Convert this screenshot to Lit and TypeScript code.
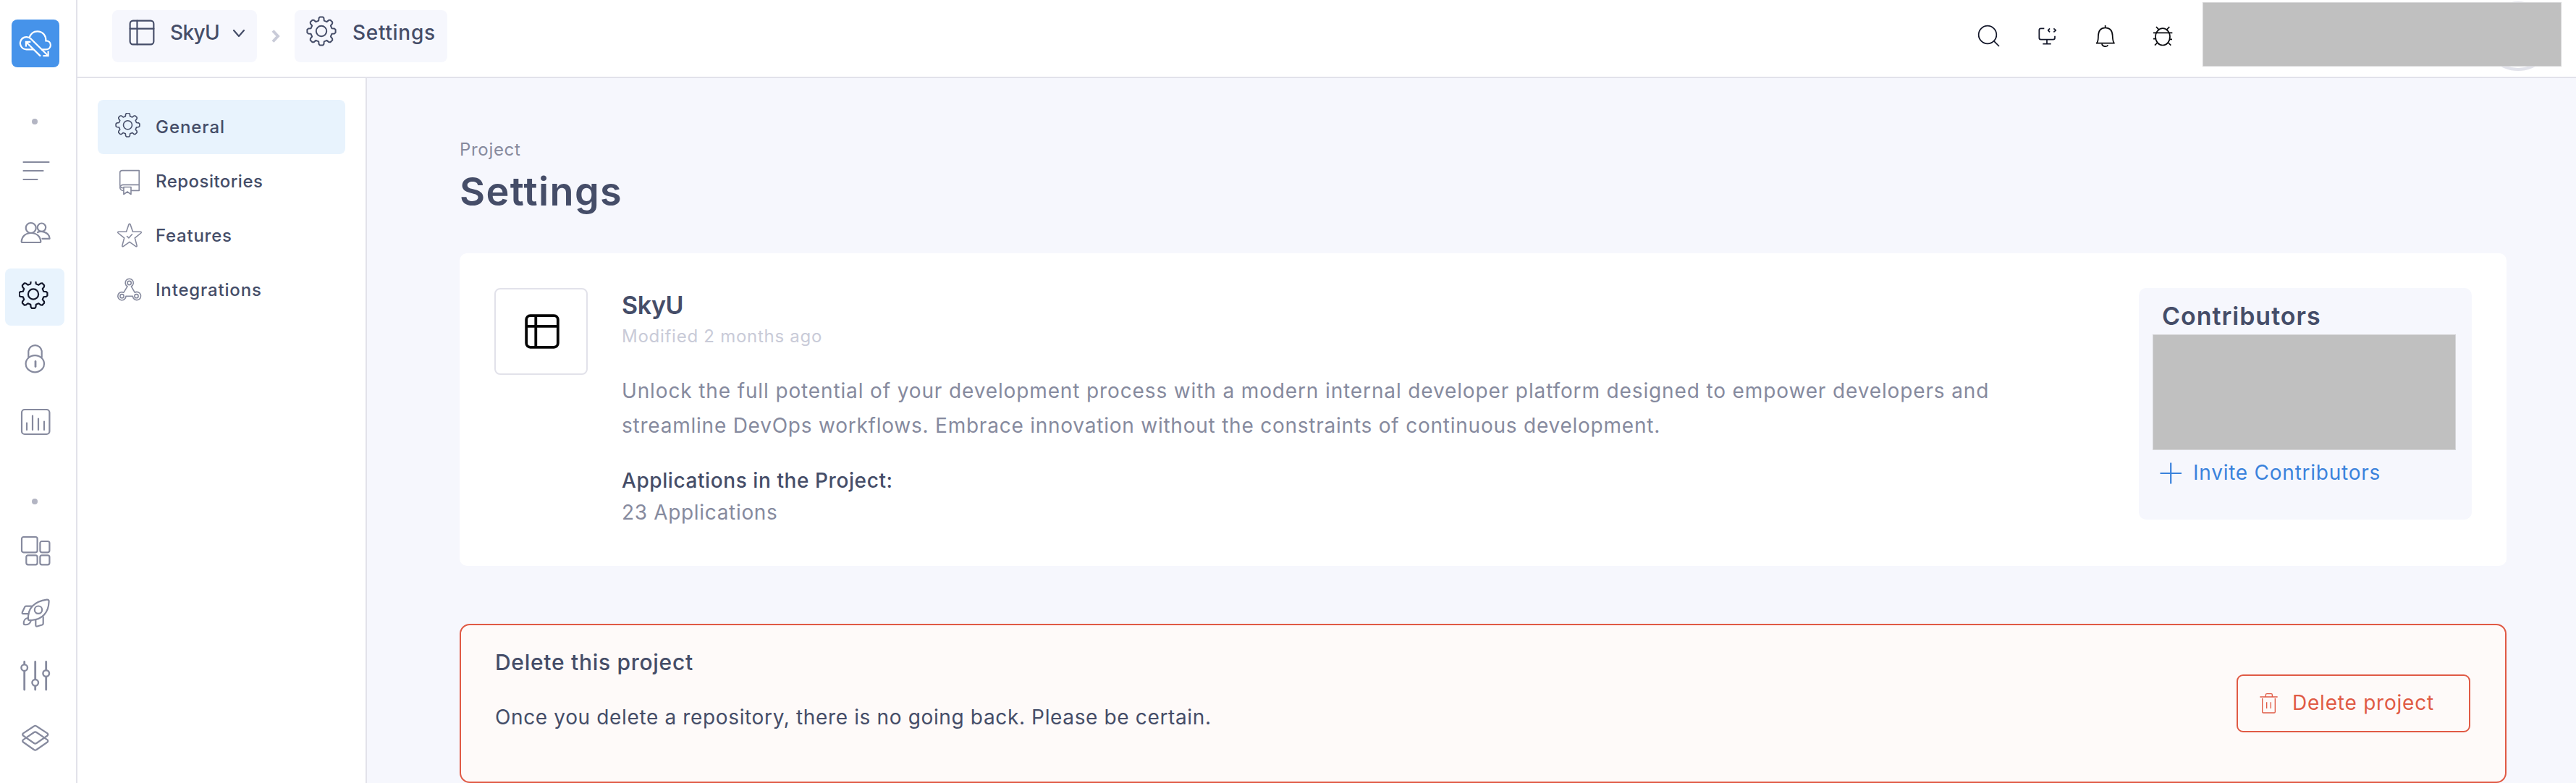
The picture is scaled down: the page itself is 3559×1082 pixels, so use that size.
import { LitElement, html, svg, css } from "lit";
import { customElement } from "lit/decorators.js";

/** Outline of an eight-toothed cog centred on (cx, cy) with outer radius r. */
function cogPath(cx: number, cy: number, r: number): string {
  const tooth = [
    [-0.19, -0.72],
    [-0.17, -0.9],
    [-0.1, -0.98],
    [0.1, -0.98],
    [0.17, -0.9],
    [0.19, -0.72],
  ];
  const out: string[] = [];
  for (let i = 0; i < 8; i++) {
    const a = (i * Math.PI) / 4;
    const p = tooth.map(([x, y]) => {
      const px = cx + r * (x * Math.cos(a) - y * Math.sin(a));
      const py = cy + r * (x * Math.sin(a) + y * Math.cos(a));
      return `${px.toFixed(2)} ${py.toFixed(2)}`;
    });
    out.push(`${i === 0 ? "M" : "L"}${p[0]}L${p[1]}L${p[2]}L${p[3]}L${p[4]}L${p[5]}`);
  }
  return out.join("") + "Z";
}

const cog = (cx: number, cy: number, r: number) => svg`
  <path d=${cogPath(cx, cy, r)} /><circle cx=${cx} cy=${cy} r=${r * 0.36} />`;

const tableIcon = svg`
  <rect x="2" y="2" width="40" height="40" rx="5" />
  <path d="M2 15.5H42M14 2V42" />`;

const railIcons = {
  menu: svg`<path d="M6.5 10H41.5M6.5 22H33.5M6.5 34H25.5" />`,
  users: svg`
    <circle cx="16.7" cy="15" r="7" />
    <path d="M3.7 33.5C4.4 26.5 9.5 22 17 22S29.6 26.5 30.3 33.5Q30.3 35 29 35H5Q3.7 35 3.7 33.5Z" />
    <circle cx="31.5" cy="14.2" r="5.7" />
    <path d="M26 21C28.5 19.6 32 19.6 35 20.6C40 22.3 42.6 26 42.6 29.8H32.5" />`,
  settings: cog(20, 17.5, 19.8),
  lock: svg`
    <path d="M13.3 20.5V12A9.3 9.3 0 0 1 31.7 12V20.5" />
    <ellipse cx="22.3" cy="29.7" rx="12.7" ry="11.6" />
    <path d="M23 26.5V33.5" stroke-width="2.8" />`,
  chart: svg`
    <rect x="4" y="5" width="38.4" height="34" rx="4" />
    <path d="M11 33V23.5M19 33V13.5M27 33V17.5M35 33V21.5" />`,
  blocks: svg`
    <rect x="4" y="3" width="21.6" height="21.3" rx="2.5" />
    <rect x="29.4" y="9" width="13" height="15.3" rx="2.5" />
    <rect x="10.3" y="28.3" width="15.3" height="13" rx="2.5" />
    <rect x="29.4" y="28.3" width="13" height="13" rx="2.5" />`,
  rocket: svg`
    <path d="M13 31C12 16 21 6 38.5 3.6Q41.8 3.2 41.6 6.5C41 21 33 31 18 32Q13.2 32.5 13 31Z" />
    <circle cx="27" cy="17.7" r="5.2" />
    <path d="M17.3 12.7H9.8Q8.8 12.7 8.4 13.6L4.8 21Q4.2 23.2 6 23.2H13.3" />
    <path d="M23.3 32V39Q23.5 40.9 25.4 40.5L32.2 38.5Q33.7 38 33.7 36.5V27.7" />
    <path d="M12 29C8.5 29.8 6.4 33 6.8 37Q7 38.2 8.2 38.2C12.5 38.6 15.5 36.5 16.7 33" />`,
  sliders: svg`
    <path d="M7.7 3.5V42M22.7 3.5V42M37.7 3.5V42" stroke-width="2.8" />
    <g fill="#fff" stroke-width="2.4">
      <circle cx="7.7" cy="11.7" r="4.3" /><circle cx="22.7" cy="32.3" r="4.3" /><circle cx="37.7" cy="19.5" r="4.3" />
    </g>`,
  layers: svg`
    <path d="M21 6.5Q22.7 5.2 24.4 6.5L39.5 16.3Q41 17.9 39.5 19.5L24.4 30Q22.7 31.2 21 30L6 19.5Q4.5 17.9 6 16.3Z" />
    <path d="M21 15Q22.7 13.8 24.4 15L39.5 25.3Q41 26.9 39.5 28.5L24.4 39Q22.7 40.3 21 39L6 28.5Q4.5 26.9 6 25.3Z" />`,
};

const navIcons = {
  general: cog(17.5, 16.7, 16.7),
  repos: svg`
    <path d="M11.8 28.7C7.5 29 6.7 27 6.7 24.5V7.5Q6.7 4.6 10 4.6H33.2V32.4H22.5" />
    <path d="M33.2 24.4H11Q6.9 24.8 6.7 28.5Q7.2 32 11.5 32.4" />
    <path d="M11.9 27.5H22V37.5L17 34L11.9 37.5Z" />`,
  features: svg`
    <path d="M19 4Q20 2.4 21 4L24.5 14.3H35.4Q37 14.8 35.8 16L27.3 22.8L30.2 33.6Q30.3 35.2 28.8 34.6L20 28.3L11.2 34.6Q9.7 35.2 9.8 33.6L12.7 22.8L4.2 16Q3 14.8 4.6 14.3H15.5Z" />
    <path d="M16.5 20.5L19 22.8L23.5 17.8" />`,
  integrations: svg`
    <circle cx="19.7" cy="10" r="2.6" /><circle cx="9.5" cy="28.2" r="2.6" /><circle cx="29.5" cy="28.2" r="2.6" />
    <path d="M17 14.8A5.6 5.6 0 1 1 22.4 14.8L27.2 23.2A5.6 5.6 0 1 1 24.4 28.2H15A5.6 5.6 0 1 1 11.9 23.2Z" />`,
};

const topIcons = {
  search: svg`<circle cx="48" cy="45" r="37" /><path d="M74 71L96 93" />`,
  monitor: svg`
    <path d="M40 19H26Q19 19 19 26V58Q19 65 26 65H77Q84 65 84 58V50M51 65V83M34 83H68" />
    <path d="M63 19L56 26.5L63 34M79 19L88 26.5L79 34" />`,
  bell: svg`
    <path d="M50 6V16M14 80C22 72 20 60 21 49C22 26 32 16 50 16C69 16 79 26 80 49C81 60 80 72 87 80Z" />
    <path d="M36 82C37 95 58 97 61 88" />`,
  bug: svg`
    <path d="M21 37H82M12 37H91" />
    <ellipse cx="51" cy="53.5" rx="30" ry="35" />
    <path d="M24 12L34 23M79 12L69 23M12 62H21M81 64H90M18 89L29 78M85 89L74 78" />`,
};

type RailKey = keyof typeof railIcons;

@customElement("side-rail")
class SideRail extends LitElement {
  static styles = css`
    :host {
      display: flex;
      flex-direction: column;
      box-sizing: border-box;
      width: 107px;
      height: 1082px;
      padding-top: 27px;
      border-right: 2px solid #e2e2ea;
      background: #fff;
      flex: none;
    }
    svg {
      width: 44px;
      height: 44px;
      fill: none;
      stroke: #868a9e;
      stroke-width: 2.2;
      stroke-linecap: round;
      stroke-linejoin: round;
    }
    .logo {
      width: 66px;
      height: 66px;
      margin-left: 16px;
      border-radius: 8px;
      background: #4693ea;
    }
    .logo svg {
      width: 66px;
      height: 66px;
      stroke: #fff;
      stroke-linecap: butt;
      stroke-linejoin: miter;
    }
    .dot {
      width: 8px;
      height: 8px;
      margin: 71px 0 21px 44px;
      border-radius: 50%;
      background: #b3b5c3;
    }
    .dot.second {
      margin-top: 60px;
    }
    .cell {
      display: flex;
      align-items: center;
      justify-content: center;
      width: 82px;
      height: 86px;
      margin-left: 7px;
    }
    .lock {
      height: 84px;
    }
    .chart {
      height: 92px;
    }
    .settings {
      height: 79px;
      margin-top: 6px;
      margin-bottom: 3px;
      border-radius: 8px;
      background: #e8f3fd;
    }
    .settings svg {
      stroke: #14182b;
    }
  `;

  private cell(name: RailKey) {
    return html`<div class="cell ${name}"><svg viewBox="0 0 44 44">${railIcons[name]}</svg></div>`;
  }

  render() {
    return html`
      <div class="logo">
        <svg viewBox="0 0 66 66">
          <path d="M30 41.3H20.7A8.6 8.6 0 1 1 26.3 26.3L49.5 49" />
          <path d="M24.3 25.3C26.5 19 31 16.3 35.5 16.3C42.5 16.3 47.6 21.5 47.4 29.3C51.5 29.3 53.9 32 53.9 35.2C53.9 39 51 41.3 47.5 41.3H41" />
          <path d="M40 50.6L20 31M19.9 37.5V30.9H26.3M50.6 43.5V50.2H43.5" />
        </svg>
      </div>
      <div class="dot"></div>
      ${(["menu", "users", "settings", "lock", "chart"] as RailKey[]).map((n) => this.cell(n))}
      <div class="dot second"></div>
      ${(["blocks", "rocket", "sliders", "layers"] as RailKey[]).map((n) => this.cell(n))}
    `;
  }
}

@customElement("top-bar")
class TopBar extends LitElement {
  static styles = css`
    :host {
      display: flex;
      align-items: center;
      box-sizing: border-box;
      height: 108px;
      padding: 0 20px 6px 48px;
      border-bottom: 2px solid #e2e2ea;
      background: #fff;
      color: #454d68;
    }
    svg {
      flex: none;
      fill: none;
      stroke: #454d68;
      stroke-width: 2;
      stroke-linecap: round;
      stroke-linejoin: round;
    }
    .chip {
      display: flex;
      align-items: center;
      box-sizing: border-box;
      height: 72px;
      padding-bottom: 10px;
      border-radius: 8px;
      background: #f6f7fd;
      font-size: 28px;
      font-weight: 500;
      line-height: 40px;
      white-space: nowrap;
    }
    .project {
      width: 200px;
      padding-left: 23px;
      letter-spacing: -0.64px;
    }
    .project .table {
      width: 36px;
      height: 36px;
      margin-right: 21px;
      stroke-width: 2.6;
    }
    .project .caret {
      width: 18px;
      height: 12px;
      margin-left: 18px;
      margin-top: 2px;
      stroke-width: 2.2;
    }
    .sep {
      width: 12px;
      height: 18px;
      margin: 0 20px;
      stroke: #c9cbd8;
      stroke-width: 4;
      stroke-linecap: butt;
      stroke-linejoin: miter;
    }
    .page {
      width: 211px;
      padding-left: 16px;
      letter-spacing: 0.7px;
    }
    .page svg {
      width: 42px;
      height: 42px;
      margin-right: 22px;
      margin-bottom: 4px;
    }
    .actions {
      display: flex;
      gap: 47px;
      margin-left: auto;
      margin-right: 38px;
    }
    .actions svg {
      width: 34px;
      height: 34px;
      stroke: #14182b;
      stroke-width: 5.2;
      stroke-linecap: butt;
    }
    .actions .bell,
    .actions .bug {
      stroke: #0b0c10;
    }
    .actions .bug {
      margin-left: -2px;
    }
    .user {
      position: relative;
      width: 496px;
      height: 96px;
    }
    .avatar {
      position: absolute;
      left: 388px;
      top: 0;
      box-sizing: border-box;
      width: 96px;
      height: 96px;
      border: 4px solid #e2e3eb;
      border-radius: 50%;
    }
    .mask {
      position: absolute;
      left: 0;
      top: 1px;
      box-sizing: border-box;
      width: 496px;
      height: 89px;
      border: 1px solid #d6d6d8;
      background: #c0c0c0;
    }
  `;

  render() {
    return html`
      <div class="chip project">
        <svg class="table" viewBox="0 0 44 44">${tableIcon}</svg>
        SkyU
        <svg class="caret" viewBox="0 0 18 12"><path d="M2 2L9 10L16 2" /></svg>
      </div>
      <svg class="sep" viewBox="0 0 12 18"><path d="M2 1.5L9 9L2 16.5" /></svg>
      <div class="chip page">
        <svg viewBox="0 0 42 42">${cog(21, 21, 20)}</svg>
        Settings
      </div>
      <div class="actions">
        <svg viewBox="0 0 102 102">${topIcons.search}</svg>
        <svg viewBox="0 0 102 102">${topIcons.monitor}</svg>
        <svg class="bell" viewBox="0 0 102 102">${topIcons.bell}</svg>
        <svg class="bug" viewBox="0 0 102 102">${topIcons.bug}</svg>
      </div>
      <div class="user">
        <div class="avatar"></div>
        <div class="mask"></div>
      </div>
    `;
  }
}

@customElement("settings-nav")
class SettingsNav extends LitElement {
  static styles = css`
    :host {
      display: flex;
      flex-direction: column;
      gap: 0.33px;
      box-sizing: border-box;
      width: 400px;
      padding: 30px 28px;
      border-right: 2px solid #e2e2ea;
      background: #fff;
      flex: none;
    }
    .item {
      display: flex;
      align-items: center;
      gap: 16px;
      box-sizing: border-box;
      width: 342px;
      height: 75px;
      padding-left: 24px;
      border-radius: 8px;
      color: #454d68;
      font-size: 24px;
      font-weight: 500;
      line-height: 34px;
      white-space: nowrap;
    }
    svg {
      width: 40px;
      height: 40px;
      fill: none;
      stroke: #868a9e;
      stroke-width: 1.6;
      stroke-linecap: round;
      stroke-linejoin: round;
    }
    .general {
      background: #e8f3fd;
      letter-spacing: 0.94px;
    }
    .general svg {
      stroke: #454d68;
    }
    .repos {
      letter-spacing: 0.47px;
    }
    .features {
      letter-spacing: 0.75px;
    }
    .integrations {
      letter-spacing: 0.83px;
    }
  `;

  render() {
    const items: [keyof typeof navIcons, string][] = [
      ["general", "General"],
      ["repos", "Repositories"],
      ["features", "Features"],
      ["integrations", "Integrations"],
    ];
    return items.map(
      ([key, label]) => html`
        <div class="item ${key}"><svg viewBox="0 0 40 40">${navIcons[key]}</svg>${label}</div>
      `
    );
  }
}

@customElement("project-settings")
class ProjectSettings extends LitElement {
  static styles = css`
    :host {
      display: block;
      box-sizing: border-box;
      flex: 1;
      min-width: 0;
      padding: 84px 96px 0 128px;
      background: #f6f7fd;
      color: #868a9e;
      white-space: nowrap;
    }
    h1,
    h2,
    h3,
    p {
      margin: 0;
    }
    svg {
      flex: none;
      fill: none;
    }
    .eyebrow {
      font-size: 24px;
      line-height: 30px;
      letter-spacing: 0.69px;
    }
    h1 {
      margin: 8px 0 50px;
      color: #454d68;
      font-size: 54px;
      font-weight: 600;
      line-height: 70px;
      letter-spacing: 1.38px;
    }
    .card {
      display: flex;
      box-sizing: border-box;
      height: 432px;
      padding: 48px;
      border-radius: 10px;
      background: #fff;
    }
    .thumb {
      display: flex;
      align-items: center;
      justify-content: center;
      box-sizing: border-box;
      width: 129px;
      height: 120px;
      margin-right: 47px;
      border: 2px solid #e2e2ea;
      border-radius: 8px;
    }
    .thumb svg {
      width: 48px;
      height: 48px;
      margin-left: 2px;
      stroke: #050505;
      stroke-width: 3.5;
    }
    .body {
      flex: 1;
      padding-top: 2px;
    }
    h2 {
      color: #454d68;
      font-size: 34px;
      font-weight: 600;
      line-height: 44px;
      letter-spacing: -0.38px;
    }
    .modified {
      margin: 6px 0 36px;
      color: #c9cbd8;
      font-size: 24px;
      line-height: 30px;
      letter-spacing: 0.73px;
    }
    .desc {
      font-size: 28px;
      line-height: 48px;
      letter-spacing: 0.87px;
    }
    .desc + .desc {
      letter-spacing: 0.77px;
    }
    h3 {
      margin: 32px 0 4px;
      color: #454d68;
      font-size: 28px;
      font-weight: 500;
      line-height: 40px;
      letter-spacing: 0.58px;
    }
    .count {
      font-size: 28px;
      line-height: 40px;
      letter-spacing: 0.67px;
    }
    .people {
      box-sizing: border-box;
      width: 460px;
      height: 320px;
      padding: 17px 22px 0 19px;
      border-radius: 10px;
      background: #f6f7fd;
    }
    .people h2 {
      margin-left: 13px;
      letter-spacing: 0.98px;
    }
    .mask {
      box-sizing: border-box;
      height: 160px;
      margin: 3px 0 11px;
      border: 1px solid #d6d6d8;
      background: #c0c0c0;
    }
    .invite {
      display: flex;
      align-items: center;
      gap: 15px;
      margin-left: 9px;
      color: #3a82dc;
      font-size: 28px;
      line-height: 40px;
      letter-spacing: 0.76px;
    }
    .invite svg {
      width: 32px;
      height: 32px;
      margin-top: 2px;
      stroke: #3a82dc;
      stroke-width: 2.2;
    }
    .danger {
      display: flex;
      align-items: center;
      justify-content: space-between;
      box-sizing: border-box;
      height: 220px;
      margin-top: 80px;
      padding: 0 48px 0 47px;
      border: 2px solid #e05a45;
      border-radius: 14px;
      background: #fefaf9;
      color: #454d68;
    }
    .danger .text {
      display: flex;
      flex-direction: column;
      gap: 36px;
      padding-bottom: 38px;
    }
    .danger h3 {
      margin: 0;
      font-size: 30px;
      letter-spacing: 0.71px;
    }
    .danger p {
      font-size: 28px;
      line-height: 40px;
      letter-spacing: 0.64px;
    }
    button {
      display: flex;
      align-items: center;
      gap: 17px;
      box-sizing: border-box;
      width: 323px;
      height: 80px;
      padding: 0 0 2px 28px;
      border: 2px solid #e05a45;
      border-radius: 9px;
      background: none;
      color: #e05a45;
      font: inherit;
      font-size: 28px;
      line-height: 40px;
      letter-spacing: 0.78px;
    }
    button svg {
      width: 30px;
      height: 32px;
      margin-top: 2px;
      stroke: #e05a45;
      stroke-width: 4;
    }
  `;

  render() {
    return html`
      <p class="eyebrow">Project</p>
      <h1>Settings</h1>
      <section class="card">
        <div class="thumb"><svg viewBox="0 0 44 44">${tableIcon}</svg></div>
        <div class="body">
          <h2>SkyU</h2>
          <p class="modified">Modified 2 months ago</p>
          <p class="desc">Unlock the full potential of your development process with a modern internal developer platform designed to empower developers and</p>
          <p class="desc">streamline DevOps workflows. Embrace innovation without the constraints of continuous development.</p>
          <h3>Applications in the Project:</h3>
          <p class="count">23 Applications</p>
        </div>
        <div class="people">
          <h2>Contributors</h2>
          <div class="mask"></div>
          <div class="invite">
            <svg viewBox="0 0 32 32"><path d="M1.5 16H31M16.2 1.5V30.5" /></svg>
            Invite Contributors
          </div>
        </div>
      </section>
      <section class="danger">
        <div class="text">
          <h3>Delete this project</h3>
          <p>Once you delete a repository, there is no going back. Please be certain.</p>
        </div>
        <button>
          <svg viewBox="0 0 90 96">
            <path d="M7 21H80M31 20V13Q31 8 36 8H54Q58 8 58 13V20" />
            <path d="M17 27V83Q17 87 21 87H66Q70 87 70 83V27M35 43V69M52 43V69" />
          </svg>
          Delete project
        </button>
      </section>
    `;
  }
}

@customElement("app-root")
class AppRoot extends LitElement {
  static styles = css`
    :host {
      display: flex;
      width: 100%;
      height: 1082px;
      overflow: hidden;
      background: #fff;
      font-family: "Inter", "Liberation Sans", sans-serif;
    }
    .main {
      display: flex;
      flex-direction: column;
      flex: 1;
      min-width: 0;
    }
    .content {
      display: flex;
      flex: 1;
      min-height: 0;
    }
  `;

  render() {
    return html`
      <side-rail></side-rail>
      <div class="main">
        <top-bar></top-bar>
        <div class="content">
          <settings-nav></settings-nav>
          <project-settings></project-settings>
        </div>
      </div>
    `;
  }
}
